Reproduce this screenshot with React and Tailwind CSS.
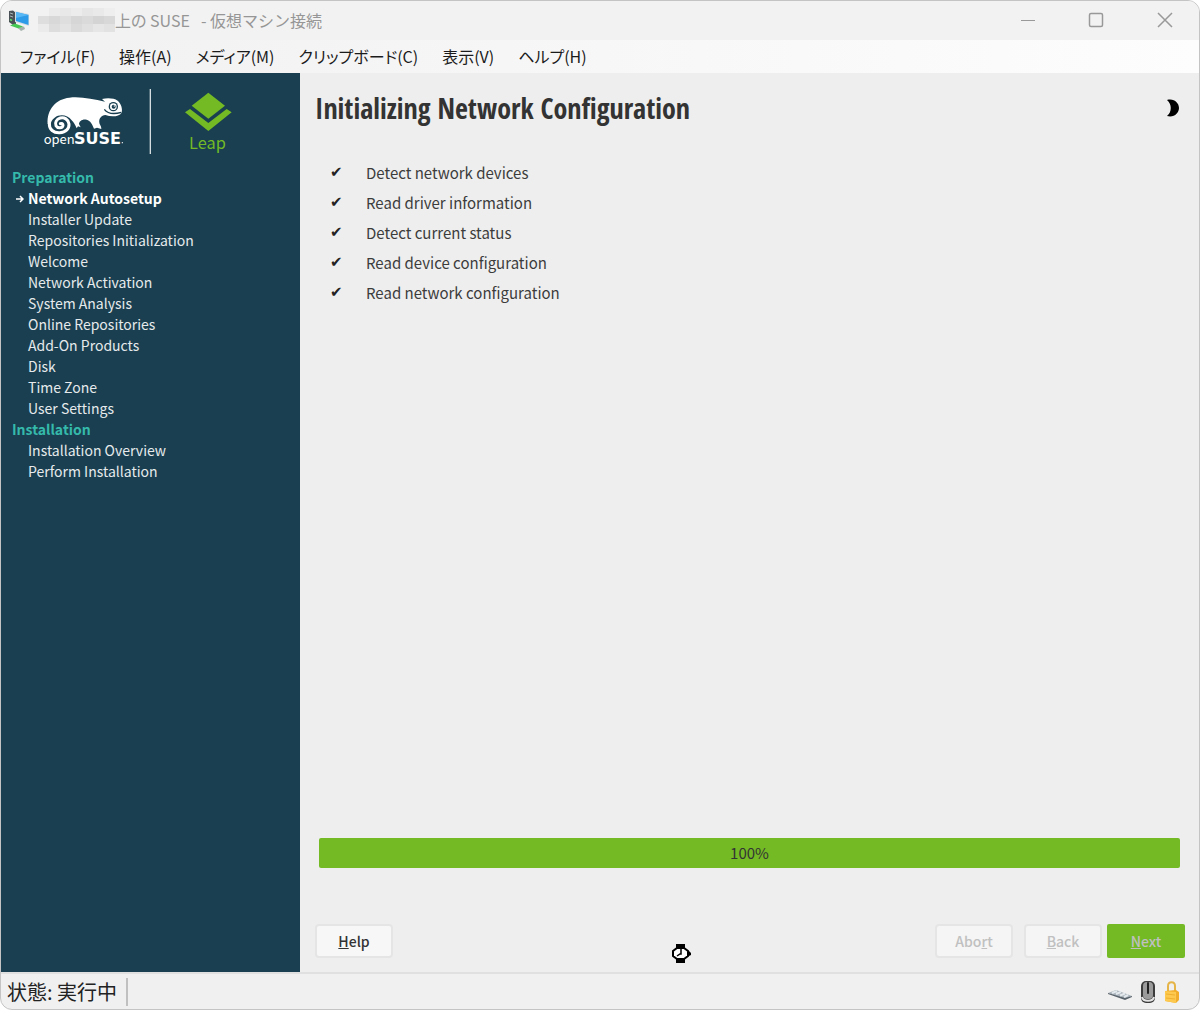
import React from 'react';

const menus = ['ファイル(F)', '操作(A)', 'メディア(M)', 'クリップボード(C)', '表示(V)', 'ヘルプ(H)'];

const sections = [
    {
        title: 'Preparation',
        steps: [
            'Network Autosetup',
            'Installer Update',
            'Repositories Initialization',
            'Welcome',
            'Network Activation',
            'System Analysis',
            'Online Repositories',
            'Add-On Products',
            'Disk',
            'Time Zone',
            'User Settings',
        ],
    },
    {
        title: 'Installation',
        steps: ['Installation Overview', 'Perform Installation'],
    },
];

const currentStep = 'Network Autosetup';

const tasks = [
    'Detect network devices',
    'Read driver information',
    'Detect current status',
    'Read device configuration',
    'Read network configuration',
];

// Shades of the blurred-out host name, row by row
const mosaic = [
    '#f2f2f2', '#ebebeb', '#e8e8e8', '#ececec', '#e6e6e6', '#e9e9e9', '#eeeeee',
    '#dedede', '#d8d8d8', '#dedede', '#d6d6d6', '#dadada', '#d4d4d4', '#d8d8d8',
    '#ebebeb', '#dddddd', '#e3e3e3', '#dadada', '#e0e0e0', '#e6e6e6', '#e2e2e2',
];

function VmIcon() {
    return (
        <svg className="h-6 w-6" viewBox="0 0 24 24" aria-hidden="true">
            <path d="M2 3 L6 2.500 L9 5 L9 16 L6 17 L2 14Z" fill="#4a5156" />
            <path d="M3 5 L6 6 M3 8 L6 9" stroke="#a8b4ba" strokeWidth="1" />
            <path d="M3 11.500 L5 12.500" stroke="#5fe06a" strokeWidth="1.500" />
            <path d="M8 3 L22 6 L22 18 L8 14Z" fill="#d5dde3" />
            <path d="M9 4 L21.500 7 L21.500 17 L9 13Z" fill="#2e9be8" />
            <path d="M9 4 L21.500 7 L9 10Z" fill="#58b8f5" />
            <path d="M3 17.500 L8 15.500 L16 18.500 L13 21Z" fill="#45c854" />
            <path d="M11 20 L17 18.500 L18 21 L14 23Z" fill="#a3b0ab" />
        </svg>
    );
}

function ProductLogo() {
    return (
        <svg className="h-[85px] w-[220px]" viewBox="0 0 660 255" role="img" aria-label="openSUSE Leap">
            <path
                fill="#fff"
                d="M53 132 C50 88 78 57 118 53 C155 49 188 58 225 65 L216 57 C232 53 252 54 263 62 C274 71 278 87 275 98 C266 111 244 111 226 105 C214 106 206 116 208 128 C209 135 214 136 214 147 L201 143 L192 146 C187 134 181 121 170 119 C157 116 147 124 147 132 L152 142 L144 139 L140 145 C136 136 132 127 125 121 C112 103 88 102 74 113 C66 119 62 126 62 136Z"
            />
            <path
                fill="none"
                stroke="#fff"
                strokeWidth="9"
                strokeLinecap="round"
                d="M58 130 C57 149 71 159 89 158 C108 157 118 145 117 132 C115 118 103 111 91 114 C79 117 74 128 78 137 C83 146 98 145 99 136 C99 131 95 129 91 131"
            />
            <circle cx="250" cy="80" r="14" fill="#193f50" />
            <circle cx="250" cy="80" r="10" fill="#fff" />
            <circle cx="251" cy="80" r="6" fill="#193f50" />
            <circle cx="253" cy="78" r="2" fill="#fff" />
            <path d="M223 88 C233 101 252 103 274 97" fill="none" stroke="#193f50" strokeWidth="4" />
            <text x="41" y="191" fill="#fff" fontSize="39" fontFamily="'Noto Sans CJK JP', sans-serif">open</text>
            <text x="132" y="191" fill="#fff" fontSize="48" fontWeight="700" fontFamily="'DejaVu Sans', sans-serif">SUSE</text>
            <circle cx="277" cy="188" r="2" fill="#fff" />
            <path d="M361 27 V222" stroke="#d5dde1" strokeWidth="4" />
            <path d="M535 38 L585 77 L535 116 L485 77Z" fill="#73ba25" />
            <path d="M465 97 L480 87 L535 129 L590 87 L605 97 L535 153Z" fill="#73ba25" />
            <text x="477" y="206" fill="#73ba25" fontSize="49" fontFamily="'Noto Sans CJK JP', sans-serif">Leap</text>
        </svg>
    );
}

function WatchCursor() {
    return (
        <svg className="absolute bottom-2 left-[371px] h-5 w-5" viewBox="0 0 20 20" aria-hidden="true">
            <path d="M5 0 H14 V5 H5Z M5 14 H14 V19 H5Z" fill="#000" />
            <path d="M16 7 H18 L20 9 V11 L18 12 H16Z" fill="#000" />
            <path d="M6 4 H13 L17 7 V12 L13 15 H6 L2 12 V7Z" fill="#fff" stroke="#000" strokeWidth="2" />
            <path d="M10 5 V10 H9 L6 12" fill="none" stroke="#000" strokeWidth="1.500" />
        </svg>
    );
}

function StatusIcons() {
    return (
        <div className="flex items-center gap-2">
            <svg className="h-6 w-6" viewBox="0 0 24 24" aria-hidden="true">
                <path d="M0 13 L8 10 L24 16 L17 19Z" fill="#a9b3bb" />
                <path d="M0 13 L17 18 L24 16 V17 L17 20 L0 14Z" fill="#59636b" />
                <path d="M4 13 L9 11 M8 14 L13 12 M12 15.500 L17 13.500 M16 17 L20 15" stroke="#e3e9ed" strokeWidth="2" />
            </svg>
            <svg className="h-6 w-4" viewBox="0 0 16 24" aria-hidden="true">
                <rect x="1" y="1" width="14" height="22" rx="5" fill="#3c3c3c" />
                <rect x="3" y="2" width="10" height="17" rx="4" fill="#9b9b9b" />
                <path d="M2 17 C3 22 13 22 14 17" fill="none" stroke="#e4e4e4" strokeWidth="2" />
                <rect x="7" y="2" width="2" height="12" rx="1" fill="#222" />
            </svg>
            <svg className="h-6 w-4" viewBox="0 0 16 24" aria-hidden="true">
                <path d="M4 12 V6 C4 1 11 1 11 6 V12" fill="none" stroke="#e5b54a" strokeWidth="2" />
                <path d="M1 11 L12 10 L15 12 V20 L12 23 L1 21Z" fill="#f2ae2a" />
                <path d="M1 11 L12 12 V23 L1 21Z" fill="#fdc94e" />
                <path d="M2 14 L11 15 M2 18 L11 19" stroke="#f0b030" strokeWidth="1" />
            </svg>
        </div>
    );
}

function App() {
    return (
        <div className="flex min-h-screen flex-col overflow-hidden rounded-xl border border-[#c4c4c4] bg-[#f0f0f0] font-['Noto_Sans_CJK_JP',sans-serif] text-[#333]">
            {/* Title bar */}
            <header className="flex h-[39px] items-center justify-between bg-[#f2f2f2] pb-[2px] pl-[6px]">
                <div className="flex items-center">
                    <VmIcon />
                    <div className="ml-[7px] grid grid-cols-7" aria-hidden="true">
                        {mosaic.map((color, i) => (
                            <span key={i} className="h-2 w-[11px]" style={{ backgroundColor: color }} />
                        ))}
                    </div>
                    <h1 className="flex gap-[11px] text-base text-[#969696]">
                        <span className="[font-feature-settings:'palt']">上の SUSE</span>
                        <span>- 仮想マシン接続</span>
                    </h1>
                </div>
                <div className="flex text-[#999]">
                    <button aria-label="Minimize" className="flex h-9 w-[68px] items-center justify-center">
                        <svg className="h-4 w-4" viewBox="0 0 16 16" fill="none" stroke="currentColor"><path d="M1 8.500 H15" /></svg>
                    </button>
                    <button aria-label="Maximize" className="flex h-9 w-[68px] items-center justify-center">
                        <svg className="h-4 w-4" viewBox="0 0 16 16" fill="none" stroke="currentColor"><rect x="1.500" y="1.500" width="13" height="13" rx="1.500" strokeWidth="1.500" /></svg>
                    </button>
                    <button aria-label="Close" className="flex h-9 w-[69px] items-center justify-center">
                        <svg className="h-4 w-4" viewBox="0 0 16 16" fill="none" stroke="currentColor" strokeWidth="1.500"><path d="M1 1 L15 15 M15 1 L1 15" /></svg>
                    </button>
                </div>
            </header>

            <nav className="flex h-[33px] items-center gap-6 bg-linear-to-r from-[#f1f1f1] to-[#fdfdfd] pb-[2px] pl-[19px] text-base text-[#1b1b1b] [font-feature-settings:'palt']">
                {menus.map((menu) => (
                    <button key={menu}>{menu}</button>
                ))}
            </nav>

            <div className="flex flex-1">
                {/* Installer steps */}
                <aside className="w-[299px] shrink-0 bg-[#193f50] pt-[7px] text-sm leading-[21px] text-[#e6eaec]">
                    <div className="pb-[2px] pl-[29px]">
                        <ProductLogo />
                    </div>
                    {sections.map((section) => (
                        <section key={section.title}>
                            <h2 className="pl-[11px] font-bold text-[#35b9ab]">{section.title}</h2>
                            <ul>
                                {section.steps.map((step) => (
                                    <li key={step} className={step === currentStep ? 'flex items-center font-bold text-white' : 'pl-[27px]'}>
                                        {step === currentStep && (
                                            <svg className="mr-1 ml-[15px] h-2 w-2" viewBox="0 0 8 8" fill="none" stroke="currentColor" strokeWidth="1.500" aria-hidden="true">
                                                <path d="M0 4 H7 M4 1 L7 4 L4 7" />
                                            </svg>
                                        )}
                                        {step}
                                    </li>
                                ))}
                            </ul>
                        </section>
                    ))}
                </aside>

                <main className="relative flex flex-1 flex-col bg-[#eeeeee] pt-[15px] pr-[14px] pb-[14px] pl-[15px] text-sm">
                    <div className="flex items-center justify-between">
                        <h2 className="font-['Open_Sans_Condensed','Noto_Sans_Condensed','Roboto_Condensed','Open_Sans',sans-serif] text-[28px] leading-10 font-bold">
                            Initializing Network Configuration
                        </h2>
                        <button aria-label="Dark mode" className="p-1 pr-[5px] text-black">
                            <svg className="h-[18px] w-[14px]" viewBox="0 0 14 18" fill="currentColor"><path d="M1 1 C8 -1 13 4 13 9 C13 14 8 19 1 17 C6 13 6 5 1 1Z" /></svg>
                        </button>
                    </div>

                    <ul className="mt-[30px] pl-[15px] text-[15px] text-[#3c3c3c]">
                        {tasks.map((task) => (
                            <li key={task} className="flex h-[30px] items-center">
                                <span className="w-9 font-['DejaVu_Sans',sans-serif] text-[#222]">✔</span>
                                {task}
                            </li>
                        ))}
                    </ul>

                    <div
                        role="progressbar"
                        aria-label="Progress"
                        aria-valuenow={100}
                        className="mr-[5px] ml-1 mt-auto flex h-[30px] items-center justify-center rounded-xs bg-[#73ba25] text-[15px]"
                    >
                        100%
                    </div>

                    <footer className="mt-14 flex items-center font-medium">
                        <button className="h-[34px] w-[78px] rounded-sm border-2 border-[#e5e5e5] bg-[#f7f7f7]"><u>H</u>elp</button>
                        <button disabled className="mr-[11px] ml-auto h-[34px] w-[78px] rounded-sm border-2 border-[#e5e5e5] bg-[#f5f5f5] text-[#c0c0c0]">Abo<u>r</u>t</button>
                        <button disabled className="mr-[5px] h-[34px] w-[78px] rounded-sm border-2 border-[#e5e5e5] bg-[#f5f5f5] text-[#c0c0c0]"><u>B</u>ack</button>
                        <button disabled className="h-[34px] w-[78px] rounded-xs bg-[#73ba25] text-[#c0c0c0]"><u>N</u>ext</button>
                    </footer>
                    <WatchCursor />
                </main>
            </div>

            {/* Status bar */}
            <div className="flex h-[37px] items-center justify-between border-t-2 border-[#e0e0e0] pr-[19px] text-xl text-[#222]">
                <span className="border-r-2 border-[#c0c0c0] pr-[9px] pl-[6px]">状態: 実行中</span>
                <StatusIcons />
            </div>
        </div>
    );
}

export default App;
